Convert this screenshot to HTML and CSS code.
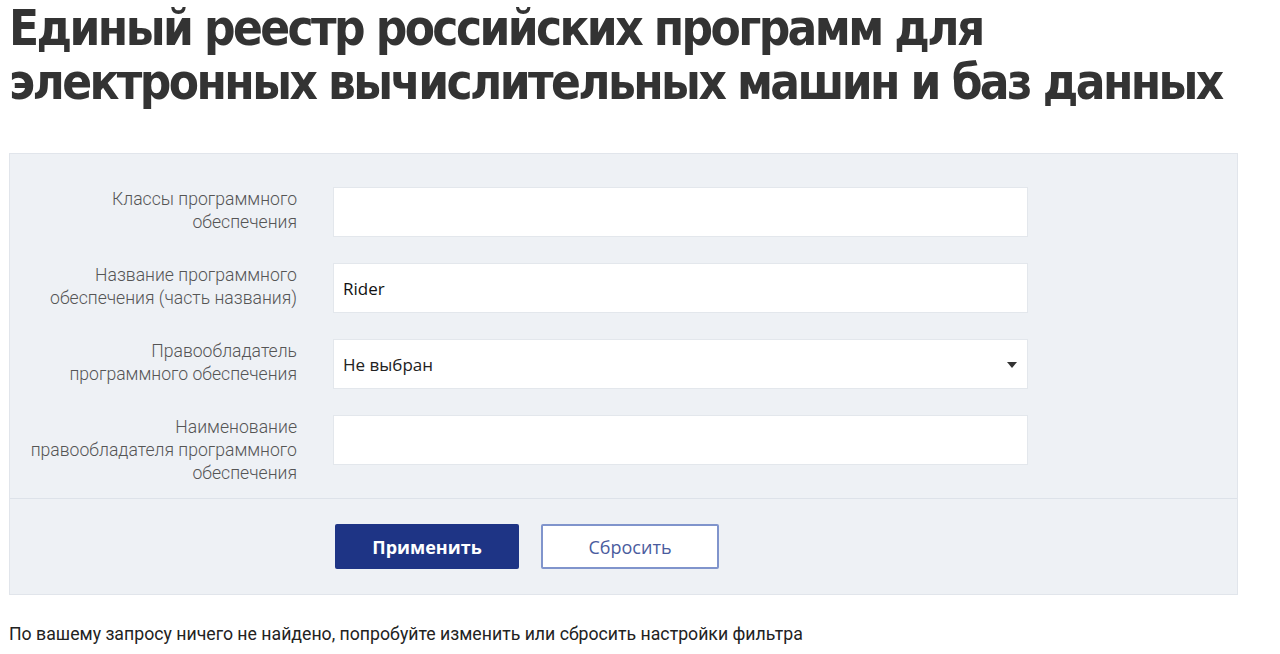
FILE: index.html
```html
<!DOCTYPE html>
<html lang="ru">
<head>
<meta charset="UTF-8" />
<meta name="viewport" content="width=device-width, initial-scale=1" />
<title>Единый реестр российских программ</title>
<link rel="stylesheet" href="styles.css">
</head>
<body>
  <h1 class="page-title">Единый реестр российских программ для электронных вычислительных машин и баз данных</h1>

  <form class="filter" id="filterForm">
    <div class="filter-fields">
      <label class="field-label" for="classes">Классы программного<br>обеспечения</label>
      <input class="field-input" id="classes" type="text">

      <label class="field-label" for="name">Название программного<br>обеспечения (часть названия)</label>
      <input class="field-input" id="name" type="text" value="Rider">

      <label class="field-label" for="owner">Правообладатель<br>программного обеспечения</label>
      <div class="field-select">
        <span>Не выбран</span>
        <svg class="select-arrow" width="10" height="6" viewBox="0 0 10 6"><path d="M0 0h10L5 6z" fill="#333"/></svg>
      </div>

      <label class="field-label" for="ownerName">Наименование<br>правообладателя программного<br>обеспечения</label>
      <input class="field-input" id="ownerName" type="text">
    </div>

    <div class="filter-actions">
      <button type="submit" class="btn btn-primary">Применить</button>
      <button type="reset" class="btn btn-outline">Сбросить</button>
    </div>
  </form>

  <p class="empty-note">По вашему запросу ничего не найдено, попробуйте изменить или сбросить настройки фильтра</p>
</body>
</html>
```

FILE: styles.css
```css
body {
  margin: 0;
  padding: 0 9px;
  background: #fff;
  color: #333;
  font-family: Roboto, "Noto Sans", sans-serif;
}
.page-title {
  margin: 0;
  padding-top: 2px;
  font-family: "DejaVu Sans Condensed", "DejaVu Sans", sans-serif;
  font-weight: 700;
  font-size: 49px;
  letter-spacing: -2.6px;
  line-height: 54px;
  color: #333;
  max-width: 1240px;
}
.filter {
  margin-top: 43px;
  width: 1229px;
  background: #eef1f5;
  border: 1px solid #e1e5eb;
  box-sizing: border-box;
}
.filter-fields {
  display: grid;
  grid-template-columns: 287px 695px;
  column-gap: 36px;
  row-gap: 26px;
  align-items: start;
  padding: 33px 0 13px;
  border-bottom: 1px solid #dde2e9;
}
.field-label {
  text-align: right;
  font-size: 17.6px;
  font-weight: 300;
  line-height: 23px;
  color: #555;
  padding-top: 1px;
}
.field-input, .field-select {
  height: 50px;
  box-sizing: border-box;
  background: #fff;
  border: 1px solid #e3e7ec;
  font-family: "Open Sans", sans-serif;
  font-size: 17px;
  color: #111;
  padding: 0 9px;
  outline: none;
}
.field-select {
  display: flex;
  align-items: center;
  justify-content: space-between;
  padding-right: 10px;
  color: #222;
}
.select-arrow {
  margin-top: 1px;
}
.filter-actions {
  display: flex;
  gap: 22px;
  padding: 25px 0 25px 325px;
}
.btn {
  height: 45px;
  font-family: "Open Sans", sans-serif;
  font-size: 18px;
  border-radius: 2px;
  cursor: pointer;
}
.btn-primary {
  width: 184px;
  background: #1e3485;
  color: #fff;
  font-weight: 700;
  border: none;
}
.btn-outline {
  width: 178px;
  background: #fff;
  color: #4a5c9e;
  border: 2px solid #8094cc;
}
.empty-note {
  margin: 29px 0 0;
  font-size: 17.7px;
  color: #222;
}
```
